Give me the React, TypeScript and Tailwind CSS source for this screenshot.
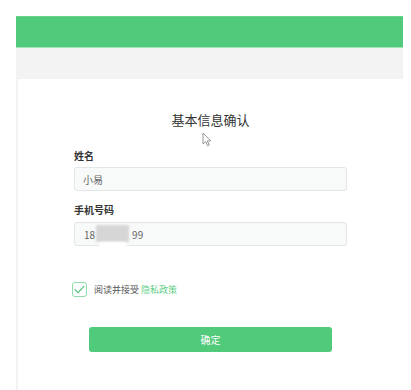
import React from "react";

const font = { fontFamily: '"Noto Sans CJK SC", "Noto Sans", sans-serif' };

function Cursor() {
  return (
    <svg
      className="absolute left-[202px] top-[132px]"
      width="11"
      height="15"
      viewBox="0 0 11 15"
    >
      <path
        d="M1 1 L1 12 L3.6 9.6 L5.6 13.8 L7.2 13 L5.3 8.9 L8.8 8.9 Z"
        fill="#ffffff"
        stroke="#8a8a8a"
        strokeWidth="0.9"
        strokeLinejoin="round"
      />
    </svg>
  );
}

function Field({ label, children }: { label: string; children: React.ReactNode }) {
  return (
    <div>
      <div className="h-[14px] text-[10px] leading-[14px] font-bold text-[#333]">{label}</div>
      {children}
    </div>
  );
}

export default function App() {
  return (
    <div className="relative w-[411px] h-[390px] overflow-hidden bg-white pt-4" style={font}>
      <div className="ml-4 w-[387px] h-[374px] bg-[#f3f3f3] flex flex-col">
        {/* header */}
        <div className="h-8 bg-[#52ca7b] border-t border-t-[#6ad38c] border-b border-b-[#a3e3b8]" />
        <div className="h-[31px]" />
        {/* card */}
        <div className="ml-[2px] flex-1 bg-white px-[56px] pt-8">
          <h1 className="text-center text-[13px] leading-[18px] text-[#333] font-normal">基本信息确认</h1>

          <div className="mt-5">
            <Field label="姓名">
              <div className="mt-1 h-6 rounded-[3px] border border-[#e3e6e6] bg-[#f8f9f9] px-[8px] flex items-center text-[10px] text-[#666]">
                小易
              </div>
            </Field>
          </div>

          <div className="mt-3">
            <Field label="手机号码">
              <div className="relative mt-[5px] h-6 rounded-[3px] border border-[#e3e6e6] bg-[#f8f9f9] px-[9px] flex items-center text-[10px] text-[#666]">
                <span>18</span>
                <span className="w-[37px]" />
                <span>99</span>
                <div className="absolute left-[21px] top-[2px] w-[33px] h-[17px] bg-[#d6d6d6] blur-[1px]" />
                <div className="absolute left-[24px] top-[19px] w-[28px] h-[8px] rounded-full bg-white blur-[1px]" />
              </div>
            </Field>
          </div>

          <div className="mt-9 flex items-center gap-[7px] -ml-[2px]">
            <div className="w-[15px] h-[15px] rounded-[3px] border border-[#8fdcaa] flex items-center justify-center">
              <svg width="11" height="9" viewBox="0 0 11 9">
                <path d="M1 4.6 L4 7.6 L10 1.4" fill="none" stroke="#52ca7b" strokeWidth="1.3" strokeLinecap="round" strokeLinejoin="round" />
              </svg>
            </div>
            <span className="text-[9px] leading-[15px] text-[#555]">
              阅读并接受 <span className="text-[#62cf86]">隐私政策</span>
            </span>
          </div>

          <div className="mt-[30px] flex justify-center">
            <button className="w-[243px] h-[25px] rounded-[3px] bg-[#52ca7b] text-white text-[10px] flex items-center justify-center">
              确定
            </button>
          </div>
        </div>
      </div>
      <Cursor />
    </div>
  );
}
